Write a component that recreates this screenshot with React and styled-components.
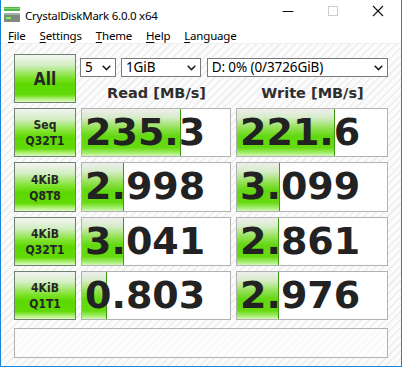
import styled, { createGlobalStyle } from "styled-components";

const GlobalStyle = createGlobalStyle`
  html, body {
    margin: 0;
    padding: 0;
    background: #ffffff;
  }
  body {
    font-family: "Noto Sans", "Open Sans", sans-serif;
  }
`;

const results = [
  { top: "Seq", bottom: "Q32T1", read: "235.3", write: "221.6" },
  { top: "4KiB", bottom: "Q8T8", read: "2.998", write: "3.099" },
  { top: "4KiB", bottom: "Q32T1", read: "3.041", write: "2.861" },
  { top: "4KiB", bottom: "Q1T1", read: "0.803", write: "2.976" },
];

// log scale meter, like the original
const meterWidth = (v) => Math.max(0, Math.round(28 + 30 * Math.log10(parseFloat(v))));

export default function App() {
  return (
    <>
      <GlobalStyle />
      <Window>
        <TitleBar>
          <AppIcon width="16" height="16" viewBox="0 0 16 16">
            <rect x="0" y="0" width="16" height="4" fill="#4fb848" />
            <rect x="0" y="1" width="16" height="1" fill="#7fd27a" />
            <rect x="0" y="6" width="16" height="9" fill="#7d8a7d" />
            <rect x="0" y="6" width="16" height="2" fill="#a4b0a4" />
            <rect x="2" y="10" width="5" height="2" fill="#7cf05a" />
          </AppIcon>
          <Title>CrystalDiskMark 6.0.0 x64</Title>
          <Caption>
            <CaptionButton>
              <svg width="12" height="12" viewBox="0 0 12 12">
                <path d="M0.5 6.5h11" stroke="#111" strokeWidth="1" />
              </svg>
            </CaptionButton>
            <CaptionButton>
              <svg width="12" height="12" viewBox="0 0 12 12">
                <rect x="1.5" y="1.5" width="9" height="9" fill="none" stroke="#cccccc" />
              </svg>
            </CaptionButton>
            <CaptionButton>
              <svg width="12" height="12" viewBox="0 0 12 12">
                <path d="M1 1l10 10M11 1L1 11" stroke="#111" strokeWidth="1.1" />
              </svg>
            </CaptionButton>
          </Caption>
        </TitleBar>

        <MenuBar>
          <MenuItem><u>F</u>ile</MenuItem>
          <MenuItem><u>S</u>ettings</MenuItem>
          <MenuItem><u>T</u>heme</MenuItem>
          <MenuItem><u>H</u>elp</MenuItem>
          <MenuItem><u>L</u>anguage</MenuItem>
        </MenuBar>

        <Content>
          <Board>
            <TestButton $big>All</TestButton>
            <TopCell>
              <ComboRow>
                <Combo $w={36}>
                  5
                  <Chevron />
                </Combo>
                <Combo $w={80}>
                  1GiB
                  <Chevron />
                </Combo>
                <Combo $w={182} $gap>
                  D: 0% (0/3726GiB)
                  <Chevron />
                </Combo>
              </ComboRow>
              <Headers>
                <Header>Read [MB/s]</Header>
                <Header>Write [MB/s]</Header>
              </Headers>
            </TopCell>

            {results.map((r) => (
              <Row key={r.top + r.bottom}>
                <TestButton>
                  <span>{r.top}</span>
                  <span>{r.bottom}</span>
                </TestButton>
                <ResultBox>
                  <Meter style={{ width: meterWidth(r.read) }} />
                  <Value>{r.read}</Value>
                </ResultBox>
                <ResultBox>
                  <Meter style={{ width: meterWidth(r.write) }} />
                  <Value>{r.write}</Value>
                </ResultBox>
              </Row>
            ))}
          </Board>
          <Comment />
        </Content>
      </Window>
    </>
  );
}

function Chevron() {
  return (
    <ChevronIcon width="9" height="6" viewBox="0 0 9 6">
      <path d="M0.7 0.8L4.5 4.6L8.3 0.8" fill="none" stroke="#1a1a1a" strokeWidth="1.5" />
    </ChevronIcon>
  );
}

const Window = styled.div`
  width: 402px;
  height: 367px;
  box-sizing: border-box;
  border: 1px solid #1883d7;
  border-top: none;
  display: flex;
  flex-direction: column;
  background: #ffffff;
`;

const TitleBar = styled.div`
  height: 30px;
  display: flex;
  align-items: center;
  padding-left: 3px;
`;

const AppIcon = styled.svg`
  flex: none;
  margin-top: -1px;
`;

const Title = styled.div`
  margin-left: 5px;
  font-size: 11.5px;
  letter-spacing: -0.25px;
  color: #000;
  flex: 1;
`;

const Caption = styled.div`
  display: flex;
  height: 100%;
`;

const CaptionButton = styled.div`
  width: 45px;
  height: 30px;
  display: flex;
  align-items: center;
  justify-content: center;
  margin-top: -4px;
  &:last-child {
    width: 46px;
  }
`;

const MenuBar = styled.div`
  height: 13px;
  display: flex;
  align-items: center;
  padding-left: 7px;
  border-bottom: 1px solid #f0f0f0;
`;

const MenuItem = styled.span`
  font-size: 11.5px;
  letter-spacing: -0.2px;
  color: #000;
  line-height: 13px;
  margin-top: -3px;
  margin-right: 14px;
  u {
    text-underline-offset: 2px;
  }
`;

const Content = styled.div`
  flex: 1;
  padding: 10px 12px 0 13px;
  background: repeating-linear-gradient(
    135deg,
    #fbfbfb 0px,
    #fbfbfb 4px,
    #eeeeee 4px,
    #eeeeee 5.5px
  );
`;

const Board = styled.div`
  display: grid;
  grid-template-columns: 62px 150px 152px;
  grid-template-rows: 49px 49px 50px 49px 49px;
  column-gap: 5px;
  row-gap: 5px;
`;

const Row = styled.div`
  display: contents;
`;

const TestButton = styled.div`
  box-sizing: border-box;
  border: 1px solid #6f826f;
  background: linear-gradient(
    to bottom,
    #f4f4f4 0%,
    #d2eec2 22%,
    #7ee22c 48%,
    #5cd800 62%,
    #62da08 84%,
    #b4f27c 94%,
    #dafac4 100%
  );
  display: flex;
  flex-direction: column;
  align-items: center;
  justify-content: center;
  font-family: "DejaVu Sans Condensed", "DejaVu Sans", sans-serif;
  font-weight: bold;
  font-size: ${(p) => (p.$big ? "17px" : "12px")};
  line-height: ${(p) => (p.$big ? "20px" : "16px")};
  color: #262626;
  padding-top: 1px;
`;

const TopCell = styled.div`
  grid-column: 2 / 4;
  display: flex;
  flex-direction: column;
`;

const ComboRow = styled.div`
  display: flex;
  margin-top: 4px;
  margin-left: -1px;
  gap: 5px;
`;

const Combo = styled.div`
  box-sizing: border-box;
  width: ${(p) => p.$w}px;
  height: 19px;
  border: 1px solid #7a7a7a;
  background: #ffffff;
  display: flex;
  align-items: center;
  justify-content: space-between;
  padding: 0 4px 0 4px;
  margin-left: ${(p) => (p.$gap ? "1px" : "0")};
  font-size: 13.5px;
  letter-spacing: -0.1px;
  color: #000;
  line-height: 17px;
  white-space: nowrap;
`;

const ChevronIcon = styled.svg`
  flex: none;
`;

const Headers = styled.div`
  display: grid;
  grid-template-columns: 150px 152px;
  column-gap: 5px;
  margin-top: 8px;
`;

const Header = styled.div`
  text-align: center;
  font-family: "DejaVu Sans", sans-serif;
  font-weight: bold;
  font-size: 14.5px;
  line-height: 17px;
  color: #2e2e2e;
  padding-left: 1px;
`;

const ResultBox = styled.div`
  position: relative;
  box-sizing: border-box;
  border: 1px solid #b2b2b2;
  background: rgba(255, 255, 255, 0.85);
  overflow: hidden;
`;

const Meter = styled.div`
  position: absolute;
  left: 0;
  top: 0;
  bottom: 0;
  box-sizing: border-box;
  border-right: 1px solid #3e9a10;
  background: linear-gradient(
    to bottom,
    #eeeeee 0%,
    #d6ecc8 18%,
    #8ee04c 42%,
    #62d810 58%,
    #66da10 82%,
    #a6ee70 94%,
    #d4f8bc 100%
  );
`;

const Value = styled.div`
  position: relative;
  font-family: "DejaVu Sans", sans-serif;
  font-weight: bold;
  font-size: 38px;
  line-height: 47px;
  color: #222222;
  padding-left: 3px;
`;

const Comment = styled.div`
  box-sizing: border-box;
  margin-top: 8px;
  width: 374px;
  height: 30px;
  border: 1px solid #b2b2b2;
  background: rgba(255, 255, 255, 0.6);
`;
